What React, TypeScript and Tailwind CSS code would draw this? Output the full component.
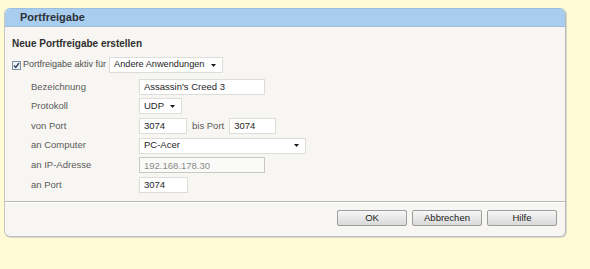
import React from "react";

type Row = {
  label: string;
  field: React.ReactNode;
};

function Caret() {
  return (
    <svg width="5" height="3" viewBox="0 0 5 3" className="ml-auto shrink-0">
      <path d="M0 0h5L2.5 3z" fill="#1a1a1a" />
    </svg>
  );
}

function TextBox({
  value,
  width,
  disabled,
}: {
  value: string;
  width: string;
  disabled?: boolean;
}) {
  return (
    <input
      readOnly
      value={value}
      className={`h-[16px] ${width} border px-[4px] text-[9.5px] outline-none ${
        disabled
          ? "border-[#c9c9c4] bg-[#fafaf8] text-[#8a8a8a]"
          : "border-[#dcdcd8] bg-white text-[#1e1e1e]"
      }`}
    />
  );
}

function SelectBox({
  value,
  width,
  size = "text-[9.5px]",
}: {
  value: string;
  width: string;
  size?: string;
}) {
  return (
    <div
      className={`flex h-[16px] ${width} ${size} items-center border border-[#dcdcd8] bg-white pl-[4px] pr-[6px] text-[#1e1e1e]`}
    >
      <span className="whitespace-nowrap">{value}</span>
      <Caret />
    </div>
  );
}

export default function App() {
  const rows: Row[] = [
    { label: "Bezeichnung", field: <TextBox value="Assassin's Creed 3" width="w-[126px]" /> },
    { label: "Protokoll", field: <SelectBox value="UDP" width="w-[43px]" /> },
    {
      label: "von Port",
      field: (
        <div className="flex items-center">
          <TextBox value="3074" width="w-[48px]" />
          <span className="ml-[5px] mr-[5px] text-[9.5px] text-[#5a5a5a]">bis Port</span>
          <TextBox value="3074" width="w-[47px]" />
        </div>
      ),
    },
    { label: "an Computer", field: <SelectBox value="PC-Acer" width="w-[167px]" /> },
    { label: "an IP-Adresse", field: <TextBox value="192.168.178.30" width="w-[126px]" disabled /> },
    { label: "an Port", field: <TextBox value="3074" width="w-[49px]" /> },
  ];

  return (
    <div
      className="h-[269px] w-[590px] bg-[#fffbd6] pl-[4px] pt-[8px]"
      style={{ fontFamily: '"Liberation Sans", Arial, sans-serif' }}
    >
      <div className="w-[562px] overflow-hidden rounded-[6px] border border-[#c4c6c0] border-t-[#9cbfe0] border-r-[#b9bab4] border-b-[#c2c2bc] bg-[#f7f6f2] shadow-[1px_1px_0_#d8d8cf]">
        <div className="flex h-[18px] items-center border-b border-[#9ec0de] bg-[#a9cdee] pl-[15px] text-[11px] font-bold text-[#2c3238]">
          Portfreigabe
        </div>

        <div className="flex flex-col pl-[7px] pt-[11px]">
          <div className="h-[12px] text-[10px] font-bold leading-[12px] text-[#2e2e2e]">
            Neue Portfreigabe erstellen
          </div>

          <div className="mt-[7px] flex h-[16px] items-center">
            <span className="flex h-[9px] w-[9px] items-center justify-center border border-[#7a8ea6] bg-[#eef2f7]">
              <svg width="7" height="7" viewBox="0 0 7 7">
                <path d="M1 3.5l1.8 2L6 1" fill="none" stroke="#2b3d55" strokeWidth="1.3" />
              </svg>
            </span>
            <span className="ml-[2px] text-[9px] text-[#4f4f4f]">Portfreigabe aktiv für</span>
            <div className="ml-[3px]">
              <SelectBox value="Andere Anwendungen" width="w-[114px]" size="text-[9.2px]" />
            </div>
          </div>

          <div className="mt-[4px] flex flex-col pl-[19px]">
            {rows.map((row) => (
              <div key={row.label} className="flex h-[19.6px] items-center">
                <span className="w-[108px] text-[9.5px] text-[#5a5a5a]">{row.label}</span>
                {row.field}
              </div>
            ))}
          </div>
        </div>

        <div className="mt-[6px] border-t border-[#b9bab4] shadow-[inset_0_1px_0_#ffffff]">
          <div className="flex justify-end gap-[5px] pb-[10px] pr-[8px] pt-[8px]">
            {["OK", "Abbrechen", "Hilfe"].map((label) => (
              <button
                key={label}
                type="button"
                className="h-[16px] w-[70px] rounded-[2px] border border-[#9d9d9d] bg-gradient-to-b from-[#f7f7f7] to-[#d9d9d9] text-[9.5px] leading-none text-[#222]"
              >
                {label}
              </button>
            ))}
          </div>
        </div>
      </div>
    </div>
  );
}
